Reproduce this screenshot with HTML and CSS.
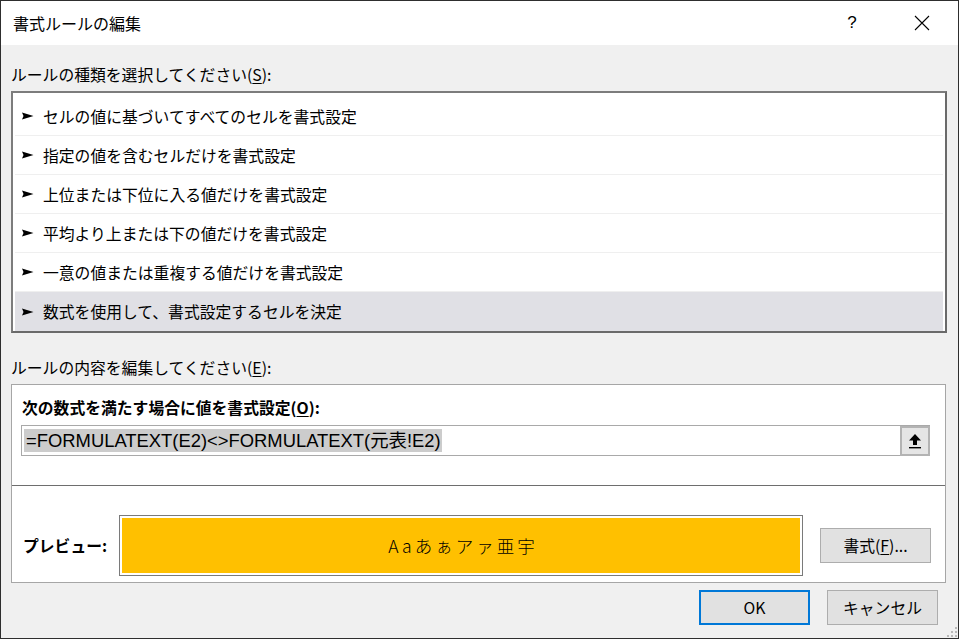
FILE: index.html
```html
<!DOCTYPE html>
<html lang="ja">
<head>
<meta charset="utf-8">
<title>書式ルールの編集</title>
<link rel="stylesheet" href="styles.css">
</head>
<body>
<div class="window">
  <header class="titlebar">
    <span class="title">書式ルールの編集</span>
    <div class="caption">
      <span class="help">?</span>
      <svg class="close" width="16" height="16" viewBox="0 0 16 16"><path d="M1 1 L15 15 M15 1 L1 15" stroke="#000" stroke-width="1.1" fill="none"/></svg>
    </div>
  </header>
  <main class="content">
    <div class="label">ルールの種類を選択してください(<u>S</u>):</div>
    <ul class="rule-list">
      <li><svg class="pointer" width="12" height="8" viewBox="0 0 12 8"><polygon points="0,0.5 11.5,4 0,7.5 1.5,4" fill="#000"/></svg>セルの値に基づいてすべてのセルを書式設定</li>
      <li><svg class="pointer" width="12" height="8" viewBox="0 0 12 8"><polygon points="0,0.5 11.5,4 0,7.5 1.5,4" fill="#000"/></svg>指定の値を含むセルだけを書式設定</li>
      <li><svg class="pointer" width="12" height="8" viewBox="0 0 12 8"><polygon points="0,0.5 11.5,4 0,7.5 1.5,4" fill="#000"/></svg>上位または下位に入る値だけを書式設定</li>
      <li><svg class="pointer" width="12" height="8" viewBox="0 0 12 8"><polygon points="0,0.5 11.5,4 0,7.5 1.5,4" fill="#000"/></svg>平均より上または下の値だけを書式設定</li>
      <li><svg class="pointer" width="12" height="8" viewBox="0 0 12 8"><polygon points="0,0.5 11.5,4 0,7.5 1.5,4" fill="#000"/></svg>一意の値または重複する値だけを書式設定</li>
      <li class="selected"><svg class="pointer" width="12" height="8" viewBox="0 0 12 8"><polygon points="0,0.5 11.5,4 0,7.5 1.5,4" fill="#000"/></svg>数式を使用して、書式設定するセルを決定</li>
    </ul>
    <div class="label label-edit">ルールの内容を編集してください(<u>E</u>):</div>
    <section class="panel">
      <div class="panel-top">
        <div class="strong">次の数式を満たす場合に値を書式設定(<u>O</u>):</div>
        <div class="formula">
          <span class="formula-text">=FORMULATEXT(E2)&lt;&gt;FORMULATEXT(元表!E2)</span>
          <span class="collapse">
            <svg width="14" height="16" viewBox="0 0 14 16"><polygon points="7,1 13,7.5 9,7.5 9,12 5,12 5,7.5 1,7.5" fill="#000"/><rect x="1" y="14" width="12" height="1.4" fill="#000"/></svg>
          </span>
        </div>
      </div>
      <div class="panel-bottom">
        <span class="strong preview-label">プレビュー:</span>
        <div class="preview"><div class="preview-fill">Aaあぁアァ亜宇</div></div>
        <button class="btn">書式(<u>F</u>)...</button>
      </div>
    </section>
    <div class="actions">
      <button class="btn default">OK</button>
      <button class="btn">キャンセル</button>
    </div>
  </main>
  <svg class="grip" width="10" height="10" viewBox="0 0 10 10">
    <rect x="8" y="0" width="2" height="2" fill="#b8b8b8"/>
    <rect x="4" y="4" width="2" height="2" fill="#b8b8b8"/><rect x="8" y="4" width="2" height="2" fill="#b8b8b8"/>
    <rect x="0" y="8" width="2" height="2" fill="#b8b8b8"/><rect x="4" y="8" width="2" height="2" fill="#b8b8b8"/><rect x="8" y="8" width="2" height="2" fill="#b8b8b8"/>
  </svg>
</div>
</body>
</html>
```

FILE: styles.css
```css
* { box-sizing: border-box; }

html, body {
  margin: 0;
  padding: 0;
  background: #f0f0f0;
}

body {
  font-family: "Noto Sans CJK JP", "Noto Sans", sans-serif;
  font-size: 15.8px;
  color: #000;
}

u { text-decoration: underline; text-underline-offset: 2px; text-decoration-thickness: 1px; }

.window {
  position: relative;
  width: 959px;
  height: 639px;
  border: 1px solid #2e2e2e;
  background: #f0f0f0;
  display: flex;
  flex-direction: column;
}

/* title bar */
.titlebar {
  height: 44px;
  background: #fff;
  display: flex;
  align-items: center;
  justify-content: space-between;
  padding-left: 12px;
  flex: none;
}

.title { font-size: 16px; line-height: 24px; }

.caption {
  display: flex;
  align-items: center;
  height: 100%;
}

.help {
  font-family: "Liberation Sans", sans-serif;
  font-size: 17px;
  width: 20px;
  text-align: center;
  margin-right: 52px;
}

.close { margin-right: 28px; display: block; }

/* body */
.content {
  flex: 1;
  display: flex;
  flex-direction: column;
  padding: 18px 11px 0 10px;
}

.label {
  line-height: 24px;
  font-size: 15.8px;
}

.rule-list {
  list-style: none;
  margin: 4px 0 0;
  padding: 4px 2px 0 2px;
  height: 242px;
  background: #fff;
  border: 2px solid #7c7c7c;
  border-right-color: #6a6a6a;
  border-bottom-color: #6a6a6a;
}

.rule-list li {
  height: 39px;
  display: flex;
  align-items: center;
  padding-left: 7px;
  border-bottom: 1px solid #efefef;
  font-size: 15.8px;
}

.rule-list li:last-child { border-bottom: none; }

.rule-list li.selected { background: #e0e0e5; }

.pointer { margin-right: 9px; flex: none; }

.label-edit { margin-top: 23px; }

/* edit panel */
.panel {
  margin-top: 4px;
  margin-right: 1px;
  height: 199px;
  background: #fff;
  border: 1px solid #a6a6a6;
  display: flex;
  flex-direction: column;
}

.panel-top {
  padding: 11px 15px 0 9px;
  height: 101px;
  flex: none;
  border-bottom: 1px solid #6e6e6e;
}

.strong {
  font-weight: 700;
  line-height: 24px;
  font-size: 15.8px;
  margin-left: 1px;
}

.formula {
  margin-top: 5px;
  height: 31px;
  border: 1px solid #a9a9a9;
  display: flex;
  align-items: center;
  justify-content: space-between;
  padding: 1px 0 1px 2px;
}

.formula-text {
  font-family: "Liberation Sans", Arial, "Noto Sans CJK JP", sans-serif;
  font-size: 18.4px;
  line-height: 23px;
  background: #cccccc;
  padding: 0 1px 0 2px;
}

.collapse {
  width: 30px;
  height: 30px;
  margin-right: -1px;
  margin-top: -1px;
  margin-bottom: -1px;
  background: #e5e5e5;
  border: 2px solid #b3b3b3;
  display: flex;
  align-items: center;
  justify-content: center;
}

.collapse svg { display: block; }

.panel-bottom {
  flex: 1;
  display: flex;
  align-items: center;
  padding: 28px 16px 5px 10px;
}

.preview-label { width: 96px; flex: none; }

.preview {
  width: 684px;
  height: 61px;
  border: 1px solid #7a7a7a;
  padding: 2px;
  background: #fff;
  flex: none;
}

.preview-fill {
  height: 100%;
  background: #ffc000;
  display: flex;
  align-items: center;
  justify-content: center;
  font-family: "Noto Sans CJK JP", sans-serif;
  font-weight: 300;
  font-size: 17.5px;
  letter-spacing: 3px;
  padding-left: 4px;
}

.btn {
  font-family: "Noto Sans CJK JP", "Noto Sans", sans-serif;
  font-size: 15.8px;
  color: #000;
  width: 111px;
  height: 35px;
  background: #e1e1e1;
  border: 1px solid #adadad;
  padding: 0;
  margin-left: 17px;
  flex: none;
}

.actions {
  display: flex;
  justify-content: flex-end;
  margin-top: 7px;
  padding-right: 9px;
}

.btn.default {
  border: 2px solid #0078d7;
}

.grip {
  position: absolute;
  right: 1px;
  bottom: 1px;
}
```
